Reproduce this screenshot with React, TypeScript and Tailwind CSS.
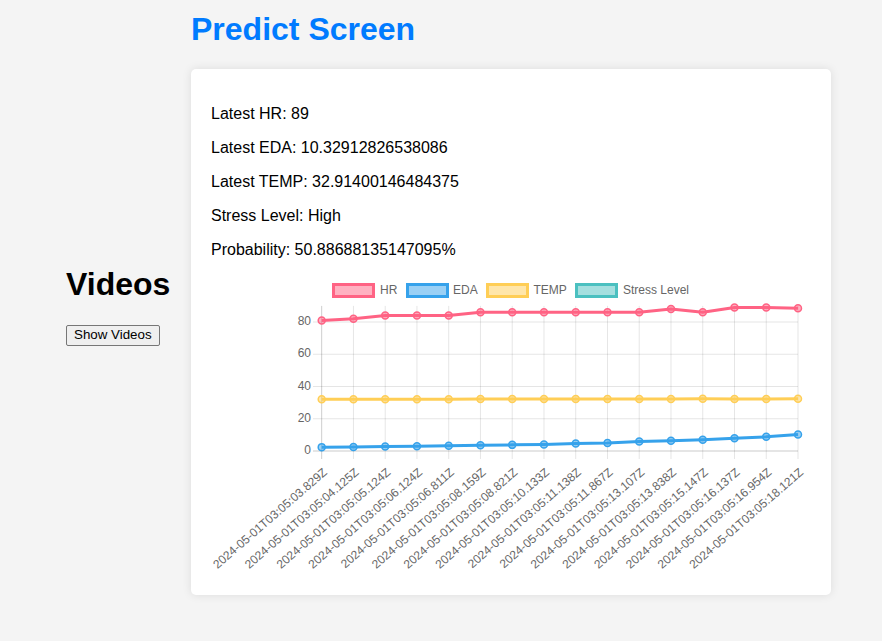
import React from 'react';

const labels = [
  '2024-05-01T03:05:03.829Z',
  '2024-05-01T03:05:04.125Z',
  '2024-05-01T03:05:05.124Z',
  '2024-05-01T03:05:06.124Z',
  '2024-05-01T03:05:06.811Z',
  '2024-05-01T03:05:08.159Z',
  '2024-05-01T03:05:08.821Z',
  '2024-05-01T03:05:10.133Z',
  '2024-05-01T03:05:11.138Z',
  '2024-05-01T03:05:11.867Z',
  '2024-05-01T03:05:13.107Z',
  '2024-05-01T03:05:13.838Z',
  '2024-05-01T03:05:15.147Z',
  '2024-05-01T03:05:16.137Z',
  '2024-05-01T03:05:16.954Z',
  '2024-05-01T03:05:18.121Z',
];

const datasets = [
  {
    label: 'HR',
    color: 'rgb(255,99,132)',
    fill: 'rgba(255,99,132,0.5)',
    data: [81, 82, 84, 84, 84, 86, 86, 86, 86, 86, 86, 88, 86, 89, 89, 88.5],
  },
  {
    label: 'EDA',
    color: 'rgb(54,162,235)',
    fill: 'rgba(54,162,235,0.5)',
    data: [2.4, 2.5, 2.8, 3.0, 3.2, 3.6, 3.8, 4.1, 4.6, 5.0, 5.9, 6.3, 7.0, 7.9, 8.8, 10.3],
  },
  {
    label: 'TEMP',
    color: 'rgb(255,206,86)',
    fill: 'rgba(255,206,86,0.5)',
    data: [32.1, 32.1, 32.1, 32.1, 32.1, 32.2, 32.2, 32.2, 32.2, 32.2, 32.3, 32.3, 32.4, 32.3, 32.3, 32.4],
  },
  {
    label: 'Stress Level',
    color: 'rgb(75,192,192)',
    fill: 'rgba(75,192,192,0.5)',
    data: [] as number[],
  },
];

// legend box x and text x, in chart coords
const legendPos = [
  { box: 122.5, text: 169 },
  { box: 196.5, text: 242 },
  { box: 276.5, text: 322.5 },
  { box: 365.5, text: 412 },
];

const left = 110.7;
const right = 587;
const zeroY = 176;
const perUnit = 1.6125;
const top = zeroY - 90 * perUnit;

const xAt = (i: number) => left + (i * (right - left)) / (labels.length - 1);
const yAt = (v: number) => zeroY - v * perUnit;

function Chart() {
  return (
    <svg width={600} height={300} viewBox="0 0 600 300" className="block" style={{ fontFamily: '"Liberation Sans", Arial, sans-serif' }}>
      {/* legend */}
      {datasets.map((d, i) => (
        <g key={d.label}>
          <rect x={legendPos[i].box} y={9.5} width={40} height={12} fill={d.fill} stroke={d.color} strokeWidth={3} />
          <text x={legendPos[i].text} y={19} fontSize={12} fill="#666">
            {d.label}
          </text>
        </g>
      ))}

      {/* vertical grid */}
      {labels.map((_, i) => (
        <line key={i} x1={xAt(i)} x2={xAt(i)} y1={top} y2={zeroY + 8} stroke="rgba(0,0,0,0.1)" strokeWidth={1} />
      ))}
      {/* horizontal grid + y ticks */}
      {[0, 20, 40, 60, 80].map((v) => (
        <g key={v}>
          <line x1={102} x2={right} y1={yAt(v)} y2={yAt(v)} stroke="rgba(0,0,0,0.1)" strokeWidth={1} />
          <text x={100} y={yAt(v)} fontSize={12} fill="#666" textAnchor="end" dominantBaseline="middle">
            {v}
          </text>
        </g>
      ))}
      <line x1={left} x2={left} y1={top} y2={zeroY + 8} stroke="rgba(0,0,0,0.1)" />
      <line x1={102} x2={right} y1={zeroY} y2={zeroY} stroke="rgba(0,0,0,0.1)" />

      {/* x labels */}
      {labels.map((l, i) => (
        <text
          key={l}
          x={0}
          y={0}
          fontSize={12}
          fill="#666"
          textAnchor="end"
          dominantBaseline="middle"
          transform={`translate(${xAt(i) + 4} ${zeroY + 20}) rotate(-41)`}
        >
          {l}
        </text>
      ))}

      {/* lines */}
      {datasets
        .slice()
        .reverse()
        .map((d) =>
          d.data.length ? (
            <g key={d.label}>
              <polyline
                points={d.data.map((v, i) => `${xAt(i)},${yAt(v)}`).join(' ')}
                fill="none"
                stroke={d.color}
                strokeWidth={3}
                strokeLinejoin="round"
              />
              {d.data.map((v, i) => (
                <circle key={i} cx={xAt(i)} cy={yAt(v)} r={3.5} fill={d.fill} stroke={d.color} strokeWidth={1.5} />
              ))}
            </g>
          ) : null
        )}
    </svg>
  );
}

export default function App() {
  return (
    <div className="min-h-[641px] bg-[#f4f4f4] flex items-start pl-[66px] text-black" style={{ fontFamily: '"Liberation Sans", Arial, sans-serif' }}>
      {/* Left — videos */}
      <div className="w-[125px] pt-[266px]">
        <h1 className="text-[32px] font-bold leading-[37px]">Videos</h1>
        <button className="mt-[22px] border border-[#767676] bg-[#efefef] rounded-[2px] px-[7px] py-[1px] text-[13.33px] leading-[16.5px] text-black">
          Show Videos
        </button>
      </div>

      {/* Right — predict */}
      <div className="w-[640px] pt-[11px]">
        <h1 className="text-[32px] font-bold leading-[37px] text-[#007bff] mb-[21px]">Predict Screen</h1>
        <div className="bg-white rounded-[5px] shadow-[0_0_10px_rgba(0,0,0,0.1)] p-5">
          <p className="my-4 text-base leading-[18px]">Latest HR: 89</p>
          <p className="my-4 text-base leading-[18px]">Latest EDA: 10.32912826538086</p>
          <p className="my-4 text-base leading-[18px]">Latest TEMP: 32.91400146484375</p>
          <p className="my-4 text-base leading-[18px]">Stress Level: High</p>
          <p className="my-4 text-base leading-[18px]">Probability: 50.88688135147095%</p>
          <Chart />
        </div>
      </div>
    </div>
  );
}
